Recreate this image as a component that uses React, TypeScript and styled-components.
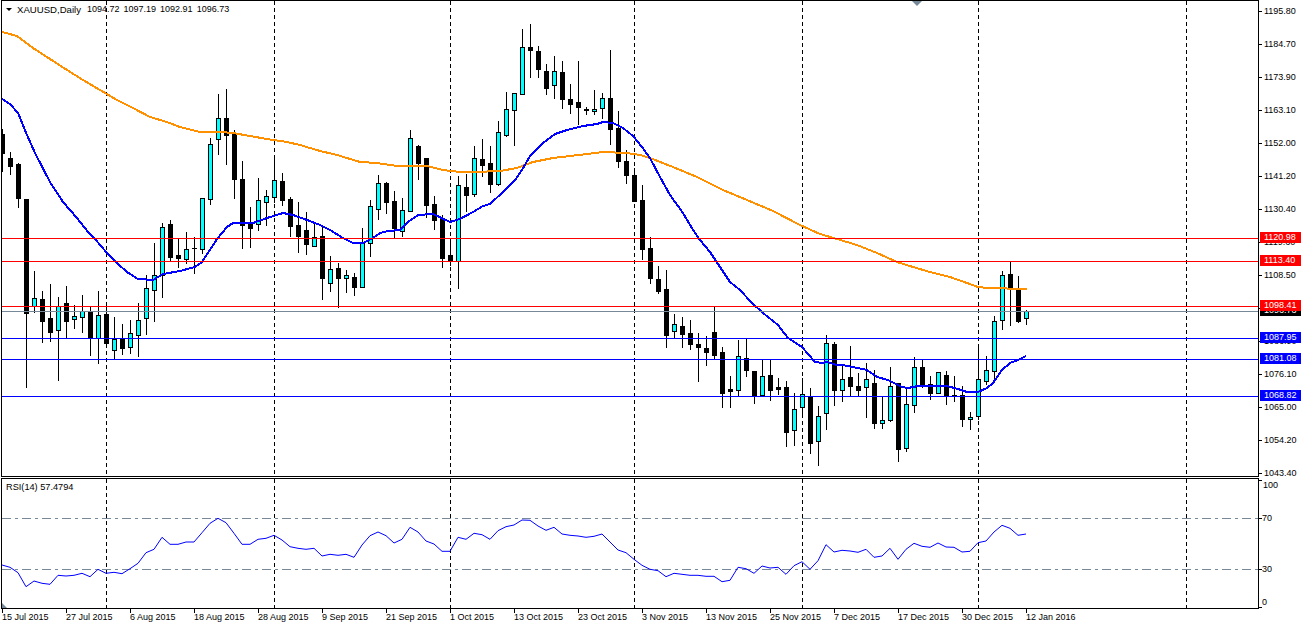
import * as React from 'react';
import styled, { createGlobalStyle } from 'styled-components';

const GlobalStyle = createGlobalStyle`
  html, body {
    margin: 0;
    padding: 0;
    background: #fff;
  }
`;

const Chart = styled.div`
  width: 1301px;
  height: 627px;
  box-sizing: border-box;
  padding-left: 1px;
  overflow: hidden;
  background: #fff;
  color: #000;
  font-family: 'Liberation Sans', Arial, sans-serif;
  font-size: 9px;
  line-height: 11px;
`;

const PaneRow = styled.div`
  display: grid;
  grid-template-columns: 1258px 42px;
`;

const MainPane = styled.div`
  position: relative;
  height: 477px;
  box-sizing: border-box;
  border: 1px solid #000;
  overflow: hidden;
`;

const RsiPane = styled(MainPane)`
  height: 131px;
  margin-top: 1px;
`;

const Plot = styled.svg`
  display: block;
`;

const Title = styled.div`
  position: absolute;
  left: 4px;
  top: 3px;
  display: flex;
  align-items: center;
  gap: 4px;
`;

const TitleArrow = styled.span`
  width: 0;
  height: 0;
  margin-right: 1px;
  border-left: 3px solid transparent;
  border-right: 3px solid transparent;
  border-top: 3px solid #000;
`;

const TitleName = styled.span`
  margin-right: 2px;
  font-size: 9.6px;
`;

const RsiTitle = styled.div`
  position: absolute;
  left: 4px;
  top: 3px;
  font-size: 9.2px;
`;

const ShiftMarker = styled.div`
  position: absolute;
  left: 910px;
  top: 0;
  width: 0;
  height: 0;
  border-left: 5px solid transparent;
  border-right: 5px solid transparent;
  border-top: 5px solid #778899;
`;

const CornerMarker = styled.div`
  position: absolute;
  left: 0;
  bottom: 0;
  width: 0;
  height: 0;
  border-right: 5px solid transparent;
  border-bottom: 5px solid #778899;
`;

const PriceAxis = styled.div`
  position: relative;
  height: 477px;
  box-sizing: border-box;
  padding-top: 6px;
`;

const PriceTick = styled.div`
  position: relative;
  height: 11px;
  margin-bottom: 22px;
  padding-left: 5px;

  &::before {
    content: '';
    position: absolute;
    left: 0;
    top: 5px;
    width: 3px;
    height: 1px;
    background: #000;
  }
`;

const PriceTag = styled.div<{ $top: number; $bg: string }>`
  position: absolute;
  left: 1px;
  right: 0;
  top: ${({ $top }) => $top}px;
  height: 11px;
  padding-left: 4px;
  background: ${({ $bg }) => $bg};
  color: #fff;
`;

const RsiAxis = styled.div`
  display: grid;
  grid-template-rows: 33px 51px 33px 11px;
  padding-top: 2px;
  margin-top: 1px;
`;

const RsiTick = styled.div<{ $pad: number; $tick: number }>`
  position: relative;
  height: 11px;
  padding-left: ${({ $pad }) => $pad}px;

  &::before {
    content: '';
    position: absolute;
    left: 0;
    top: ${({ $tick }) => $tick}px;
    width: 3px;
    height: 1px;
    background: #000;
  }
`;

const DateAxis = styled.div`
  display: flex;
  padding-left: 1px;
`;

const DateTick = styled.div`
  position: relative;
  flex: 0 0 64px;
  padding-top: 3px;
  white-space: nowrap;

  &::before {
    content: '';
    position: absolute;
    left: 0;
    top: 0;
    width: 1px;
    height: 4px;
    background: #000;
  }
`;

// hi, lo, body top, body bottom, 1 = bull candle; x is 2 + 8 * index
type Candle = [number, number, number, number, number];
const candles: Candle[] = [
  [129, 171, 134, 153, 0], [152, 174, 158, 166, 0], [163, 207, 164, 198, 0], [199, 387, 199, 313, 0],
  [271, 312, 298, 306, 1], [291, 342, 299, 321, 0], [284, 341, 318, 332, 0], [297, 380, 306, 330, 1],
  [286, 338, 303, 321, 0], [305, 328, 316, 319, 1], [295, 332, 311, 317, 1], [307, 355, 311, 337, 0],
  [291, 363, 315, 338, 1], [307, 345, 314, 343, 0], [317, 359, 339, 350, 1], [324, 354, 339, 348, 0],
  [320, 353, 333, 347, 1], [303, 356, 320, 335, 1], [275, 334, 288, 318, 1], [243, 321, 275, 290, 1],
  [223, 297, 227, 275, 1], [220, 261, 224, 257, 0], [238, 267, 255, 258, 0], [232, 263, 249, 259, 1],
  [237, 273, 248, 248, 0], [198, 253, 198, 249, 1], [138, 204, 144, 199, 1], [94, 154, 118, 139, 1],
  [89, 164, 118, 135, 0], [130, 198, 133, 179, 0], [161, 248, 179, 225, 0], [207, 247, 223, 228, 0],
  [178, 230, 200, 224, 1], [190, 225, 196, 202, 1], [156, 202, 180, 197, 1], [173, 205, 181, 200, 0],
  [197, 236, 199, 226, 0], [202, 252, 225, 236, 0], [212, 254, 230, 244, 0], [222, 246, 237, 246, 1],
  [227, 299, 236, 278, 0], [256, 291, 269, 283, 1], [263, 307, 268, 278, 0], [270, 292, 275, 278, 1],
  [273, 295, 277, 287, 0], [228, 287, 243, 287, 1], [200, 256, 206, 243, 1], [175, 219, 183, 209, 1],
  [182, 213, 183, 202, 0], [191, 238, 201, 228, 0], [198, 236, 210, 231, 1], [130, 211, 138, 211, 1],
  [145, 179, 146, 163, 0], [158, 217, 158, 205, 0], [196, 229, 204, 220, 0], [215, 267, 218, 258, 0],
  [240, 265, 255, 261, 0], [176, 288, 185, 261, 1], [174, 211, 187, 195, 0], [146, 196, 158, 194, 1],
  [139, 176, 159, 165, 0], [146, 192, 163, 184, 0], [121, 185, 132, 184, 1], [92, 136, 109, 135, 1],
  [93, 145, 93, 110, 1], [29, 94, 47, 94, 1], [24, 77, 47, 50, 0], [46, 77, 51, 69, 0],
  [64, 94, 71, 88, 0], [56, 98, 71, 85, 1], [61, 108, 72, 99, 0], [84, 113, 99, 104, 0],
  [61, 124, 102, 107, 0], [107, 114, 109, 110, 0], [90, 114, 109, 111, 1], [93, 118, 98, 108, 1],
  [50, 144, 98, 129, 0], [111, 167, 128, 161, 0], [150, 183, 161, 175, 0], [168, 201, 175, 201, 0],
  [185, 259, 200, 249, 0], [237, 283, 248, 278, 0], [266, 293, 279, 291, 0], [270, 347, 289, 335, 0],
  [314, 338, 324, 331, 1], [317, 347, 326, 334, 0], [320, 349, 333, 344, 0], [333, 381, 344, 347, 0],
  [336, 365, 348, 352, 0], [307, 359, 332, 355, 0], [347, 407, 352, 393, 0], [376, 407, 389, 391, 0],
  [340, 395, 356, 390, 1], [338, 376, 358, 370, 0], [371, 403, 371, 396, 0], [359, 396, 376, 395, 1],
  [359, 400, 375, 390, 0], [378, 394, 387, 389, 0], [381, 446, 387, 432, 0], [393, 445, 409, 430, 1],
  [378, 417, 394, 407, 1], [388, 453, 397, 443, 0], [406, 465, 416, 441, 1], [335, 429, 343, 413, 1],
  [342, 405, 344, 390, 0], [365, 401, 379, 390, 1], [346, 396, 377, 386, 0], [373, 395, 386, 390, 0],
  [363, 417, 379, 387, 1], [370, 428, 383, 423, 0], [397, 428, 420, 423, 1], [367, 421, 386, 420, 1],
  [383, 461, 383, 449, 0], [388, 451, 404, 448, 1], [357, 412, 367, 405, 1], [360, 387, 367, 385, 0],
  [376, 399, 384, 393, 0], [372, 393, 372, 393, 1], [371, 404, 375, 396, 0], [376, 401, 395, 396, 0],
  [386, 426, 395, 419, 0], [412, 429, 417, 419, 1], [348, 419, 379, 416, 1], [356, 384, 370, 381, 1],
  [316, 378, 321, 371, 1], [271, 329, 275, 320, 1], [262, 325, 274, 287, 0], [276, 322, 289, 321, 0],
  [310, 324, 311, 318, 1],
];

const ma21 = `2,99 10,104 18,113 27,135 35,153 50,182 63,202 77,218 88,232 95,239 107,253 117,263 127,272 138,279 153,280
  163,274 180,271 195,267 202,262 217,239 227,227 233,223 253,223 267,218 283,213 293,215 307,220 320,225 330,230 343,238
  353,243 363,243 373,238 380,233 388,231 400,230 408,222 418,215 433,214 450,222 460,219 473,212 483,206 490,204 503,192
  515,180 522,170 530,156 543,143 555,134 567,130 583,126 597,124 603,122 613,123 623,128 633,136 642,147 650,158 660,177
  670,195 683,213 693,230 700,240 710,252 722,270 730,282 740,290 752,303 763,313 778,325 788,338 802,347 815,362 822,363
  827,362 837,365 843,365 867,370 877,377 888,380 902,387 908,388 918,386 947,386 958,389 967,392 978,392 987,388 993,383
  1002,370 1010,363 1018,360 1026,356`;

const ma100 = `2,32 17,36 33,48 50,59 67,70 83,80 100,90 117,100 133,108 150,117 167,122 180,127 200,132 220,132 233,133 250,136
  267,139 287,142 300,145 320,151 337,155 360,162 377,163 397,166 427,166 443,170 460,172 475,172 500,171 517,168 533,162
  553,158 570,156 587,154 603,152 627,153 640,155 650,158 673,167 697,177 723,190 747,200 773,211 800,225 820,234 837,239
  857,245 877,253 897,262 913,267 930,272 950,277 967,283 978,287 987,288 1027,289`;

const rsi = [
  565, 567.3, 572.7, 586.7, 581, 583.3, 584.3, 575.3, 576, 575.3, 573.3, 576.7, 569.3, 573.3, 572.3, 573.7,
  568.7, 563.3, 552.7, 549.3, 537.3, 544.3, 544.3, 542, 542, 532.7, 523.3, 518.3, 522.7, 533.3, 544.3, 544.3,
  539.3, 538.3, 535.3, 540, 546.7, 548.3, 549.3, 548.3, 556, 554.3, 555.3, 554.3, 557.3, 545, 535.7, 532,
  535.7, 543, 539.3, 527.3, 532, 541, 544, 551.3, 551.3, 537.3, 539.3, 533.3, 534.7, 539.3, 530.7, 526.7,
  525, 520, 520.3, 526, 530.3, 527.3, 534, 535.3, 536, 537.3, 536.3, 534, 542, 550, 552.7, 559.3,
  565.3, 569.3, 570.7, 576.7, 573.3, 574.3, 575.3, 575.3, 576.3, 576.3, 581.7, 580.3, 567.3, 568.7, 573.3, 566,
  568, 567.3, 574.3, 565.7, 561.7, 569.3, 560.7, 544.7, 552, 550.3, 551, 552.3, 549.3, 557.3, 556, 548.3,
  559.3, 549.3, 543.3, 546.3, 547.3, 543, 547, 547.3, 552, 551.3, 542.7, 541, 532, 525.3, 528.3, 535.3,
  534,
];

const separators = [106, 274, 450, 634, 802, 978, 1186];

const levels = [
  { y: 238, price: '1120.98', color: '#ff0000' },
  { y: 261, price: '1113.40', color: '#ff0000' },
  { y: 311, price: '1096.73', color: '#000000', line: '#778899' },
  { y: 306, price: '1098.41', color: '#ff0000' },
  { y: 338, price: '1087.95', color: '#0000ff' },
  { y: 359, price: '1081.08', color: '#0000ff' },
  { y: 396, price: '1068.82', color: '#0000ff' },
];

const priceScale = [
  '1195.80', '1184.70', '1173.90', '1163.10', '1152.00', '1141.20', '1130.40', '1119.60',
  '1108.50', '1097.70', '1086.90', '1076.10', '1065.00', '1054.20', '1043.40',
];

const dates = [
  '15 Jul 2015', '27 Jul 2015', '6 Aug 2015', '18 Aug 2015', '28 Aug 2015', '9 Sep 2015',
  '21 Sep 2015', '1 Oct 2015', '13 Oct 2015', '23 Oct 2015', '3 Nov 2015', '13 Nov 2015',
  '25 Nov 2015', '7 Dec 2015', '17 Dec 2015', '30 Dec 2015', '12 Jan 2016',
];

const Separators: React.FC<{ y1: number; y2: number }> = ({ y1, y2 }) => (
  <g stroke="#000" strokeDasharray="4 3" shapeRendering="crispEdges">
    {separators.map(x => (
      <line key={x} x1={x + 0.5} x2={x + 0.5} y1={y1} y2={y2} />
    ))}
  </g>
);

const Candles = () => (
  <g shapeRendering="crispEdges">
    {candles.map(([hi, lo, top, bot, up], i) => {
      const x = 2 + 8 * i;
      return (
        <g key={i}>
          <rect x={x} y={hi} width={1} height={lo - hi + 1} fill="#000" />
          <rect x={x - 2} y={top} width={5} height={bot - top + 1} fill="#000" />
          {up === 1 && bot - top > 1 && (
            <rect x={x - 1} y={top + 1} width={3} height={bot - top - 1} fill="#00ffff" />
          )}
        </g>
      );
    })}
  </g>
);

export default function App() {
  return (
    <Chart>
      <GlobalStyle />
      <PaneRow>
        <MainPane>
          <Plot width={1256} height={475} viewBox="2 1 1256 475">
            <Separators y1={1} y2={476} />
            <Candles />
            <g fill="none" strokeWidth={2} shapeRendering="crispEdges">
              <polyline points={ma100} stroke="#ff9000" />
              <polyline points={ma21} stroke="#0000ff" />
            </g>
            <g shapeRendering="crispEdges">
              {levels.map(l => (
                <line key={l.y} x1={2} x2={1258} y1={l.y + 0.5} y2={l.y + 0.5} stroke={l.line || l.color} />
              ))}
            </g>
          </Plot>
          <Title>
            <TitleArrow />
            <TitleName>XAUUSD,Daily</TitleName>
            <span>1094.72</span>
            <span>1097.19</span>
            <span>1092.91</span>
            <span>1096.73</span>
          </Title>
          <ShiftMarker />
        </MainPane>
        <PriceAxis>
          {priceScale.map(p => (
            <PriceTick key={p}>{p}</PriceTick>
          ))}
          {levels.map(l => (
            <PriceTag key={l.price} $top={l.y - 6} $bg={l.color}>
              {l.price}
            </PriceTag>
          ))}
        </PriceAxis>
      </PaneRow>
      <PaneRow>
        <RsiPane>
          <Plot width={1256} height={129} viewBox="2 479 1256 129">
            <Separators y1={479} y2={608} />
            <g fill="none" stroke="#778899" strokeDasharray="9 4 3 4" shapeRendering="crispEdges">
              <line x1={2} x2={1258} y1={518.5} y2={518.5} />
              <line x1={2} x2={1258} y1={569.5} y2={569.5} />
            </g>
            <polyline
              fill="none"
              stroke="#0000ff"
              strokeWidth={1}
              points={rsi.map((y, i) => `${2 + 8 * i},${y}`).join(' ')}
            />
          </Plot>
          <RsiTitle>RSI(14) 57.4794</RsiTitle>
          <CornerMarker />
        </RsiPane>
        <RsiAxis>
          <RsiTick $pad={4} $tick={0}>100</RsiTick>
          <RsiTick $pad={3} $tick={5}>70</RsiTick>
          <RsiTick $pad={3} $tick={5}>30</RsiTick>
          <RsiTick $pad={3} $tick={10}>0</RsiTick>
        </RsiAxis>
      </PaneRow>
      <DateAxis>
        {dates.map(d => (
          <DateTick key={d}>{d}</DateTick>
        ))}
      </DateAxis>
    </Chart>
  );
}
